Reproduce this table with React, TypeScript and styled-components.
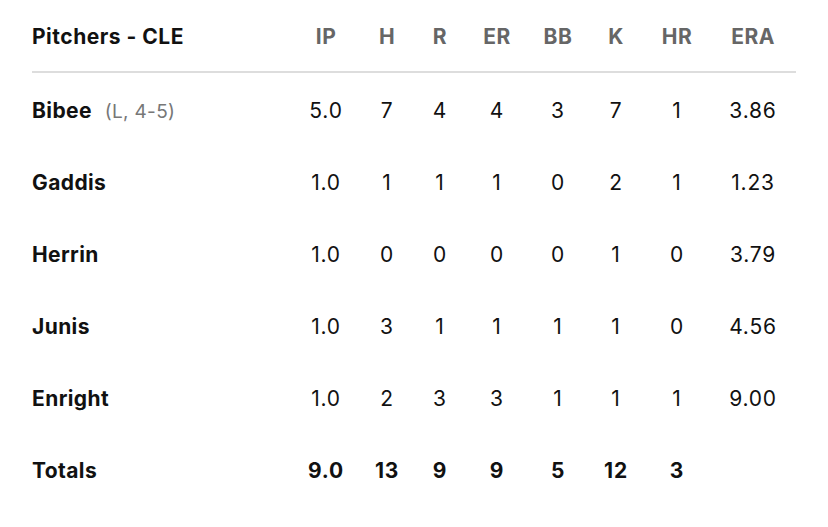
import React from "react";
import styled, { createGlobalStyle } from "styled-components";

const Global = createGlobalStyle`
  html, body { margin: 0; padding: 0; background: #fff; }
  body { font-family: "Inter", "Lato", sans-serif; }
`;

const Wrap = styled.div`
  padding: 0 32px;
  width: 764px;
`;

const cols = "264px 60px 62px 44px 70px 52px 64px 58px 1fr";

const HeaderRow = styled.div`
  display: grid;
  grid-template-columns: ${cols};
  align-items: center;
  box-sizing: border-box;
  height: 73px;
  padding-top: 1px;
  border-bottom: 2px solid #dddddd;
`;

const Row = styled.div`
  display: grid;
  grid-template-columns: ${cols};
  align-items: center;
  box-sizing: border-box;
  height: 72px;
  padding-top: 2px;
`;

const Title = styled.div`
  font-size: 21px;
  font-weight: 700;
  letter-spacing: 0.5px;
  color: #111;
`;

const HeadCell = styled.div<{ $last?: boolean }>`
  text-align: center;
  font-size: 21px;
  font-weight: 700;
  letter-spacing: 0.5px;
  color: #666;
  padding-left: ${(p) => (p.$last ? "4px" : "0")};
`;

const Name = styled.div`
  font-size: 21px;
  font-weight: 700;
  letter-spacing: 0.4px;
  color: #111;
  display: flex;
  align-items: baseline;
  gap: 13px;
`;

const Note = styled.span`
  font-size: 19px;
  font-weight: 400;
  letter-spacing: 0.3px;
  color: #777;
`;

const Cell = styled.div<{ $bold?: boolean; $last?: boolean }>`
  text-align: center;
  font-size: 21px;
  font-weight: ${(p) => (p.$bold ? 700 : 400)};
  letter-spacing: 0.8px;
  color: #111;
  padding-left: ${(p) => (p.$last ? "4px" : "0")};
`;

const heads = ["IP", "H", "R", "ER", "BB", "K", "HR", "ERA"];

const rows: { name: string; note?: string; stats: string[] }[] = [
  { name: "Bibee", note: "(L, 4-5)", stats: ["5.0", "7", "4", "4", "3", "7", "1", "3.86"] },
  { name: "Gaddis", stats: ["1.0", "1", "1", "1", "0", "2", "1", "1.23"] },
  { name: "Herrin", stats: ["1.0", "0", "0", "0", "0", "1", "0", "3.79"] },
  { name: "Junis", stats: ["1.0", "3", "1", "1", "1", "1", "0", "4.56"] },
  { name: "Enright", stats: ["1.0", "2", "3", "3", "1", "1", "1", "9.00"] },
];

const totals = ["9.0", "13", "9", "9", "5", "12", "3", ""];

export default function App() {
  return (
    <>
      <Global />
      <Wrap>
        <HeaderRow>
          <Title>Pitchers - CLE</Title>
          {heads.map((h, i) => (
            <HeadCell key={h} $last={i === heads.length - 1}>
              {h}
            </HeadCell>
          ))}
        </HeaderRow>
        {rows.map((r) => (
          <Row key={r.name}>
            <Name>
              {r.name}
              {r.note && <Note>{r.note}</Note>}
            </Name>
            {r.stats.map((s, i) => (
              <Cell key={i} $last={i === r.stats.length - 1}>
                {s}
              </Cell>
            ))}
          </Row>
        ))}
        <Row>
          <Name>Totals</Name>
          {totals.map((s, i) => (
            <Cell key={i} $bold $last={i === totals.length - 1}>
              {s}
            </Cell>
          ))}
        </Row>
      </Wrap>
    </>
  );
}
